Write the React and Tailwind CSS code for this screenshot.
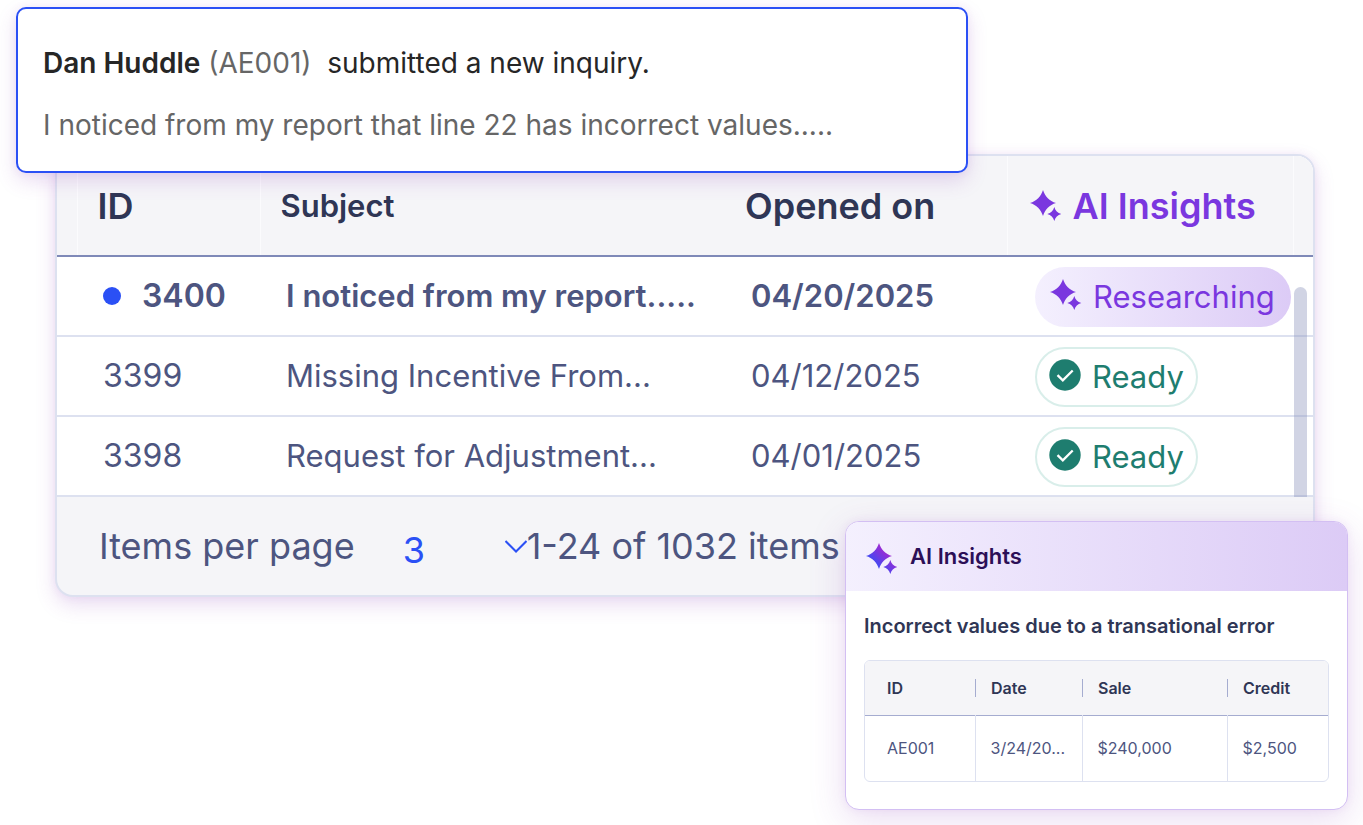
import { useId } from 'react';

const inquiries = [
  { id: '3400', subject: 'I noticed from my report.....', opened: '04/20/2025', status: 'Researching', unread: true },
  { id: '3399', subject: 'Missing Incentive From...', opened: '04/12/2025', status: 'Ready' },
  { id: '3398', subject: 'Request for Adjustment...', opened: '04/01/2025', status: 'Ready' },
];

const credits = [{ id: 'AE001', date: '3/24/2025', shortDate: '3/24/20...', sale: '$240,000', credit: '$2,500' }];

function Sparkles({ gradient = false }) {
  const id = useId();
  return (
    <svg viewBox="0 0 32 32" className="size-8 shrink-0" fill={gradient ? `url(#${id})` : 'currentColor'} aria-hidden="true">
      {gradient && (
        <linearGradient id={id} gradientUnits="userSpaceOnUse" x1="24" y1="6" x2="8" y2="22">
          <stop offset="0.2" stopColor="#9b2bd3" />
          <stop offset="1" stopColor="#3b4cf5" />
        </linearGradient>
      )}
      <path d="M13 0C15 6.5 19.5 11 26 13C19.5 15 15 19.5 13 26C11 19.5 6.5 15 0 13C6.5 11 11 6.5 13 0Z" />
      <path d="M24.3 17C25.3 20.7 27.6 23 31.3 24C27.6 25 25.3 27.3 24.3 31C23.3 27.3 21 25 17.3 24C21 23 23.3 20.7 24.3 17Z" />
    </svg>
  );
}

function CheckCircle() {
  return (
    <svg viewBox="0 0 32 32" className="size-8 shrink-0" aria-hidden="true">
      <circle cx="16" cy="16" r="15.7" fill="#1e7d6f" />
      <path d="M8.5 16.2L13.8 21.3L23.7 11.5" fill="none" stroke="#fff" strokeWidth="2.3" />
    </svg>
  );
}

function StatusPill({ status }) {
  if (status === 'Researching') {
    return (
      <span className="inline-flex h-[60px] items-center gap-[11px] rounded-full bg-linear-to-r from-[#f4f0fe] to-[#dccbf6] pr-4 pl-[15px] align-middle text-[#7a37df]">
        <span className="pb-1"><Sparkles /></span>
        {status}
      </span>
    );
  }
  return (
    <span className="inline-flex h-[60px] items-center gap-[11px] rounded-full border-2 border-[#d9eeea] bg-white px-3 align-middle text-[#1e7d6f]">
      <span className="pb-1"><CheckCircle /></span>
      {status}
    </span>
  );
}

function Notice() {
  return (
    <section className="relative z-10 mr-[395px] ml-4 rounded-[10px] border-2 border-[#2b50f5] bg-white px-[25px] pt-9 pb-7 text-[28px] leading-[36px] text-[#666] shadow-[0_0_8px_rgba(140,60,185,0.08),0_8px_20px_rgba(140,60,185,0.18)]">
      <p className="whitespace-pre text-[#262626]">
        <strong className="font-semibold">Dan Huddle</strong> <span className="text-[#666]">(AE001)</span>
        {'  '}submitted a new inquiry.
      </p>
      <p className="mt-[26px]">I noticed from my report that line 22 has incorrect values.....</p>
    </section>
  );
}

function InquiryTable() {
  return (
    <div className="relative">
      <table className="w-full table-fixed border-collapse text-left text-[31px] leading-[40px] text-[#4d5580]">
        <colgroup>
          <col className="w-5" />
          <col className="w-[183px]" />
          <col />
          <col className="w-[284px]" />
          <col className="w-[286px]" />
          <col className="w-5" />
        </colgroup>
        <thead className="bg-[#f5f5f8] text-[#2f3655]">
          <tr className="h-[100px] border-b-2 border-[#7f89b8]">
            <td />
            <th className="border-l border-[#fbfbfd] pl-5 text-[36px] font-semibold">ID</th>
            <th className="border-l border-[#fbfbfd] pl-5 font-semibold">Subject</th>
            <th className="pl-[22px] text-[36px] font-semibold">Opened on</th>
            <th className="border-l border-[#fbfbfd] pl-[22px] text-[36px] font-semibold text-[#7a37df]">
              <span className="flex items-center gap-[11px]">
                <Sparkles />
                AI Insights
              </span>
            </th>
            <td className="border-l border-[#fbfbfd]" />
          </tr>
        </thead>
        <tbody>
          {inquiries.map((row) => (
            <tr key={row.id} className={row.unread ? 'h-20 border-b-2 border-[#dde1f0] font-semibold' : 'h-20 border-b-2 border-[#dde1f0]'}>
              <td />
              <td className="pl-[26px] text-[32px]">
                <span className="flex items-center gap-[21px]">
                  {row.unread && <span className="size-[18px] rounded-full bg-[#2b50f5]" />}
                  {row.id}
                </span>
              </td>
              <td className="truncate pl-[26px]">{row.subject}</td>
              <td className="pl-7">{row.opened}</td>
              <td className="pt-[2px] pl-7 font-normal">
                <StatusPill status={row.status} />
              </td>
              <td />
            </tr>
          ))}
        </tbody>
      </table>
      <div className="absolute right-[6px] bottom-0 h-[210px] w-[13px] rounded-t-full bg-[#8c94bc]/40" />
    </div>
  );
}

function Pager() {
  return (
    <div className="flex h-[98px] items-center pl-[42px] text-[36px] leading-[44px] whitespace-nowrap text-[#4d5580]">
      <label htmlFor="page-size">Items per page</label>
      <span className="relative ml-12 flex items-center">
        <select id="page-size" defaultValue="3" className="w-[124px] appearance-none bg-transparent pt-2 text-[#2b50f5] outline-none">
          <option>3</option>
          <option>6</option>
          <option>9</option>
        </select>
        <svg viewBox="0 0 22 13" className="pointer-events-none absolute right-0 h-[13px] w-[22px]" fill="none" stroke="#2b50f5" strokeWidth="2" aria-hidden="true">
          <path d="M0.5 1L11 11.5L21.5 1" />
        </svg>
      </span>
      <span>1-24 of 1032 items</span>
    </div>
  );
}

function ColumnHead({ children }) {
  return (
    <th className="font-semibold">
      <span className="block border-l border-[#a5acd0] pl-[15px]">{children}</span>
    </th>
  );
}

function InsightsCard() {
  return (
    <aside className="relative z-10 -mt-[76px] mr-[15px] ml-auto w-[503px] overflow-hidden rounded-[14px] border border-[#d3bff3] bg-white pb-[27px] shadow-[0_0_8px_rgba(140,60,185,0.08),0_10px_36px_rgba(140,60,185,0.18)]">
      <header className="flex h-[69px] items-center gap-3 bg-linear-to-r from-[#f4f0fe] to-[#dccbf6] pl-5 text-[22px] font-semibold text-[#2c0f57]">
        <span className="pt-1"><Sparkles gradient /></span>
        <h2>AI Insights</h2>
      </header>
      <div className="px-[18px] pt-[21px] text-[#2f3655]">
        <h3 className="text-[20px] leading-[28px] font-semibold">Incorrect values due to a transational error</h3>
        <div className="mt-5 overflow-hidden rounded-md border border-[#dde1f0]">
          <table className="w-full table-fixed border-collapse text-left text-[16px] leading-[18px]">
            <colgroup>
              <col className="w-[110px]" />
              <col className="w-[107px]" />
              <col className="w-[145px]" />
              <col />
            </colgroup>
            <thead className="bg-[#f5f5f8]">
              <tr className="h-[54px] border-b border-[#a5acd0]">
                <th className="pl-[22px] font-semibold">ID</th>
                <ColumnHead>Date</ColumnHead>
                <ColumnHead>Sale</ColumnHead>
                <ColumnHead>Credit</ColumnHead>
              </tr>
            </thead>
            <tbody className="text-[#4d5580]">
              {credits.map((row) => (
                <tr key={row.id} className="h-[66px]">
                  <td className="pl-[22px]">{row.id}</td>
                  <td className="border-l border-[#dde1f0] pl-[15px]" title={row.date}>{row.shortDate}</td>
                  <td className="border-l border-[#dde1f0] pl-[15px]">{row.sale}</td>
                  <td className="border-l border-[#dde1f0] pl-[15px]">{row.credit}</td>
                </tr>
              ))}
            </tbody>
          </table>
        </div>
      </div>
    </aside>
  );
}

export default function App() {
  return (
    <main className="overflow-hidden bg-white pt-[7px] pb-[15px] font-['Inter',sans-serif]">
      <Notice />
      <section className="-mt-[19px] mr-12 ml-[55px] overflow-hidden rounded-[18px] border-2 border-[#dde1f0] bg-[#f5f5f8] shadow-[0_0_8px_rgba(140,60,185,0.08),0_8px_20px_rgba(140,60,185,0.18)]">
        <div className="bg-white">
          <InquiryTable />
        </div>
        <Pager />
      </section>
      <InsightsCard />
    </main>
  );
}
